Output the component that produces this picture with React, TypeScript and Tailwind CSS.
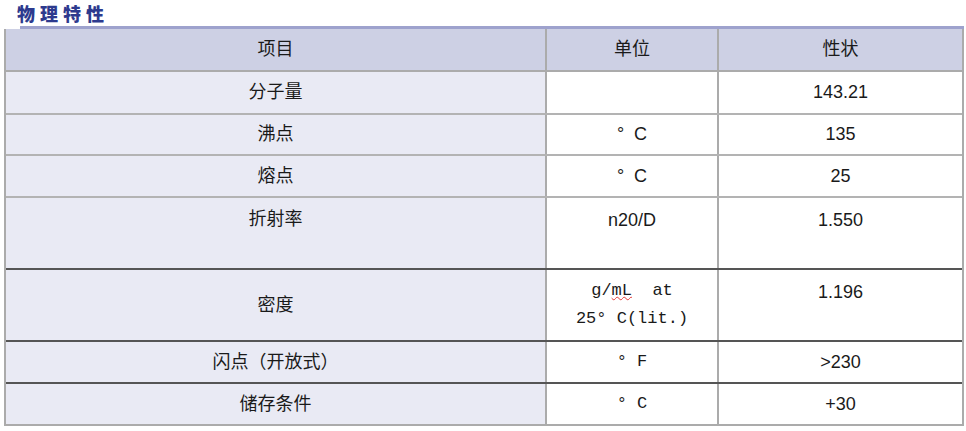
const cjk = "font-['Liberation_Sans','Noto_Sans_CJK_SC',sans-serif]";
const mono = "font-['Liberation_Mono','Noto_Sans_CJK_SC',monospace]";

type Row = {
  name: string;
  unit: React.ReactNode;
  value: string;
  h: string;
  line: string;
  top?: boolean;
};

const rows: Row[] = [
  { name: "分子量", unit: "", value: "143.21", h: "h-[43px]", line: "border-[#b3b3b3]" },
  { name: "沸点", unit: <span className={cjk}>°&nbsp;&nbsp;C</span>, value: "135", h: "h-[41px]", line: "border-[#b3b3b3]" },
  { name: "熔点", unit: <span className={cjk}>°&nbsp;&nbsp;C</span>, value: "25", h: "h-[42px]", line: "border-[#b3b3b3]" },
  { name: "折射率", unit: <span className={cjk}>n20/D</span>, value: "1.550", h: "h-[72px]", line: "border-[#555]", top: true },
];

export default function App() {
  return (
    <div className={`w-[966px] h-[431px] bg-white ${cjk} text-[#1a1a1a]`}>
      <div className="h-[26px] pl-[17px] text-[18px] leading-[26px] font-black tracking-[5px] text-[#2d3a8e] font-['Noto_Sans_CJK_SC',sans-serif]">
        物理特性
      </div>
      <div className="ml-[20px] w-[944px] h-[3px] bg-[#9ea2cd]" />
      <div className="ml-[4px] w-[960px] border-x-2 border-b-2 border-[#ababab]">
        <div className="flex h-[43px] border-b-2 border-[#ababab] bg-[#cdd0e4] text-[18px]">
          <div className="w-[541px] border-r-2 border-[#ababab] flex items-center justify-center">项目</div>
          <div className="w-[172px] border-r-2 border-[#ababab] flex items-center justify-center">单位</div>
          <div className="flex-1 flex items-center justify-center">性状</div>
        </div>
        {rows.map((r) => (
          <div key={r.name} className={`flex ${r.h} border-b-2 ${r.line}`}>
            <div className={`w-[541px] border-r-2 border-[#ababab] bg-[#e9eaf4] flex justify-center text-[18px] ${r.top ? "items-start pt-[8px]" : "items-center"}`}>
              {r.name}
            </div>
            <div className={`w-[172px] border-r-2 border-[#ababab] flex justify-center text-[18px] ${r.top ? "items-start pt-[9px]" : "items-center"}`}>
              {r.unit}
            </div>
            <div className={`flex-1 flex justify-center text-[18px] ${r.top ? "items-start pt-[9px]" : "items-center"}`}>
              {r.value}
            </div>
          </div>
        ))}
        <div className="flex h-[72px] border-b-2 border-[#555]">
          <div className="w-[541px] border-r-2 border-[#ababab] bg-[#e9eaf4] flex items-center justify-center text-[18px]">密度</div>
          <div className={`w-[172px] border-r-2 border-[#ababab] flex flex-col items-center justify-center ${mono} text-[17px] leading-[28px]`}>
            <div>
              g/<span className="underline decoration-wavy decoration-[#e53935] decoration-1">mL</span>&nbsp;&nbsp;at
            </div>
            <div>25°&nbsp;C(lit.)</div>
          </div>
          <div className="flex-1 flex items-start justify-center pt-[9px] text-[18px]">1.196</div>
        </div>
        <div className="flex h-[42px] border-b-2 border-[#555]">
          <div className="w-[541px] border-r-2 border-[#ababab] bg-[#e9eaf4] flex items-center justify-center text-[18px]">闪点（开放式）</div>
          <div className={`w-[172px] border-r-2 border-[#ababab] flex items-center justify-center ${mono} text-[17px]`}>°&nbsp;F</div>
          <div className="flex-1 flex items-center justify-center text-[18px]">&gt;230</div>
        </div>
        <div className="flex h-[40px]">
          <div className="w-[541px] border-r-2 border-[#ababab] bg-[#e9eaf4] flex items-center justify-center text-[18px]">储存条件</div>
          <div className={`w-[172px] border-r-2 border-[#ababab] flex items-center justify-center ${mono} text-[17px]`}>°&nbsp;C</div>
          <div className="flex-1 flex items-center justify-center text-[18px]">+30</div>
        </div>
      </div>
    </div>
  );
}
